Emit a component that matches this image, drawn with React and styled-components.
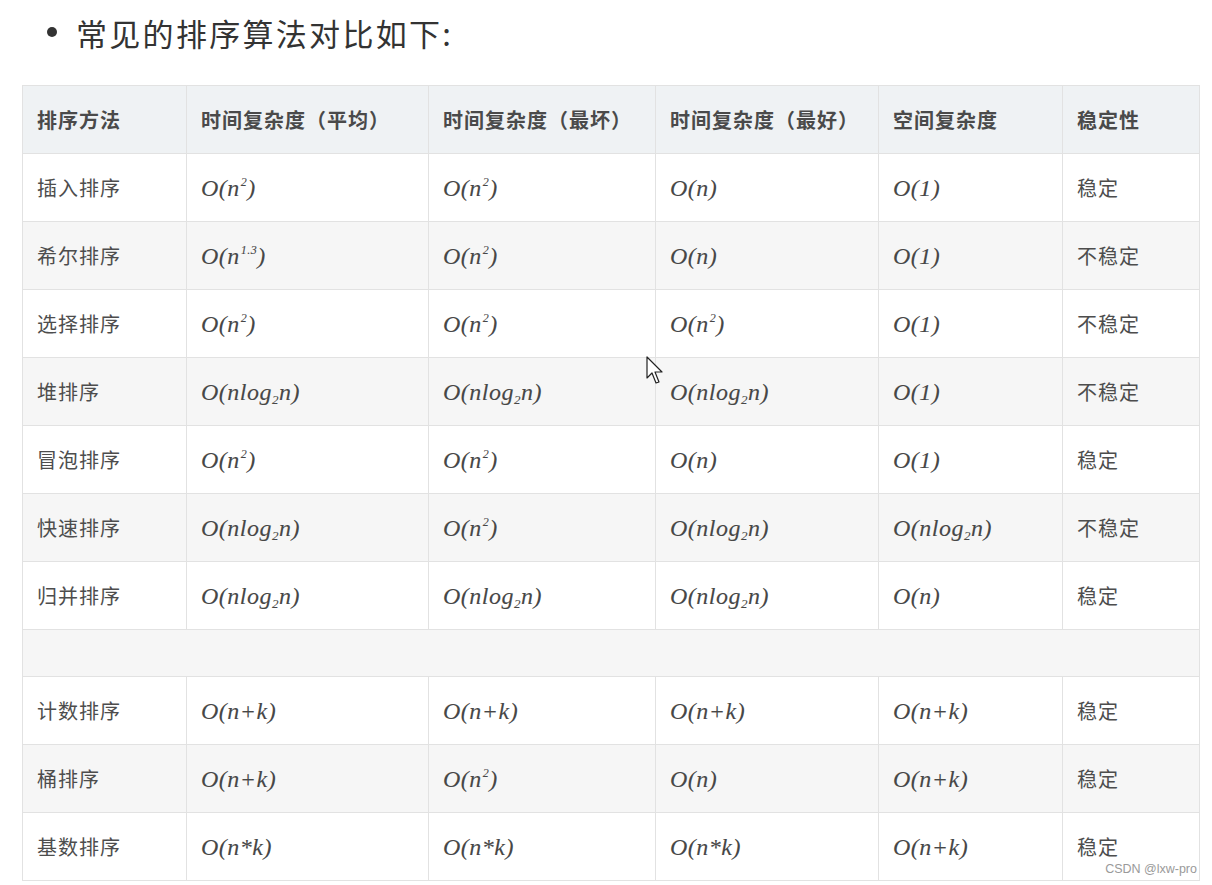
import React from "react";
import styled, { createGlobalStyle } from "styled-components";

const Global = createGlobalStyle`
  html, body { margin: 0; padding: 0; background: #fff; }
  body { font-family: "Noto Sans CJK SC", "Noto Sans", sans-serif; color: #4d4d4d; }
`;

const Page = styled.div`
  position: relative;
  width: 1212px;
  height: 885px;
  overflow: hidden;
  padding: 0 0 0 22px;
  box-sizing: border-box;
`;

const Title = styled.div`
  display: flex;
  align-items: center;
  height: 60px;
  padding: 2px 0 0 25px;
  gap: 19px;
  font-size: 31px;
  color: #333;
  letter-spacing: 2.3px;
`;

const Dot = styled.span`
  width: 10px;
  height: 10px;
  border-radius: 50%;
  background: #333;
  flex: none;
`;

const Table = styled.table`
  margin-top: 23px;
  border-collapse: collapse;
  table-layout: fixed;
  width: 1178px;
  border: 1px solid #e2e2e2;
`;

const Th = styled.th`
  height: 67px;
  background: #eff2f4;
  border: 1px solid #e2e2e2;
  text-align: left;
  padding: 0 0 0 14px;
  font-size: 20px;
  font-weight: 700;
  color: #4a4a4a;
  letter-spacing: 1px;
`;

const Tr = styled.tr`
  background: ${(p) => (p.$alt ? "#f6f6f6" : "#fff")};
`;

const Td = styled.td`
  height: ${(p) => (p.$empty ? "46px" : "67px")};
  border: 1px solid #e2e2e2;
  padding: 0 0 0 14px;
  font-size: 20px;
  color: #4d4d4d;
  letter-spacing: 1px;
`;

const Math = styled.span`
  font-family: "Liberation Serif", "DejaVu Serif", serif;
  font-style: italic;
  font-size: 24px;
  color: #474747;
  letter-spacing: 0.5px;
  -webkit-text-stroke: 0.1px #474747;
  sup {
    font-size: 12px;
    vertical-align: 10px;
    line-height: 0;
    padding-left: 1px;
  }
  sub {
    font-size: 13px;
    vertical-align: -4px;
    line-height: 0;
  }
`;

const Watermark = styled.div`
  position: absolute;
  right: 15px;
  bottom: 9px;
  font-family: "Liberation Sans", Arial, sans-serif;
  font-size: 12.5px;
  color: #9a9a9a;
`;

const Cursor = styled.svg`
  position: absolute;
  left: 646px;
  top: 356px;
`;

const cols = [164, 242, 227, 223, 184, 137];
const head = ["排序方法", "时间复杂度（平均）", "时间复杂度（最坏）", "时间复杂度（最好）", "空间复杂度", "稳定性"];

const N2 = () => (<Math>O(n<sup>2</sup>)</Math>);
const N13 = () => (<Math>O(n<sup>1.3</sup>)</Math>);
const N = () => (<Math>O(n)</Math>);
const O1 = () => (<Math>O(1)</Math>);
const NL = () => (<Math>O(nlog<sub>2</sub>n)</Math>);
const NK = () => (<Math>O(n+k)</Math>);
const NXK = () => (<Math>O(n*k)</Math>);

const rows = [
  ["插入排序", <N2 />, <N2 />, <N />, <O1 />, "稳定"],
  ["希尔排序", <N13 />, <N2 />, <N />, <O1 />, "不稳定"],
  ["选择排序", <N2 />, <N2 />, <N2 />, <O1 />, "不稳定"],
  ["堆排序", <NL />, <NL />, <NL />, <O1 />, "不稳定"],
  ["冒泡排序", <N2 />, <N2 />, <N />, <O1 />, "稳定"],
  ["快速排序", <NL />, <N2 />, <NL />, <NL />, "不稳定"],
  ["归并排序", <NL />, <NL />, <NL />, <N />, "稳定"],
  null,
  ["计数排序", <NK />, <NK />, <NK />, <NK />, "稳定"],
  ["桶排序", <NK />, <N2 />, <N />, <NK />, "稳定"],
  ["基数排序", <NXK />, <NXK />, <NXK />, <NK />, "稳定"],
];

export default function App() {
  return (
    <Page>
      <Global />
      <Title>
        <Dot />
        <span>常见的排序算法对比如下:</span>
      </Title>
      <Table>
        <colgroup>
          {cols.map((w, i) => (<col key={i} style={{ width: w }} />))}
        </colgroup>
        <thead>
          <tr>{head.map((h) => (<Th key={h}>{h}</Th>))}</tr>
        </thead>
        <tbody>
          {rows.map((r, i) =>
            r === null ? (
              <Tr key={i} $alt>
                <Td $empty colSpan={6} />
              </Tr>
            ) : (
              <Tr key={i} $alt={i % 2 === 1}>
                {r.map((c, j) => (<Td key={j}>{c}</Td>))}
              </Tr>
            )
          )}
        </tbody>
      </Table>
      <Cursor width="20" height="30" viewBox="0 0 20 30">
        <path d="M1 1 L1 22 L6 17 L10 27 L13 26 L9 16 L16 16 Z" fill="#fff" stroke="#222" strokeWidth="1.2" strokeLinejoin="round" />
      </Cursor>
      <Watermark>CSDN @lxw-pro</Watermark>
    </Page>
  );
}
